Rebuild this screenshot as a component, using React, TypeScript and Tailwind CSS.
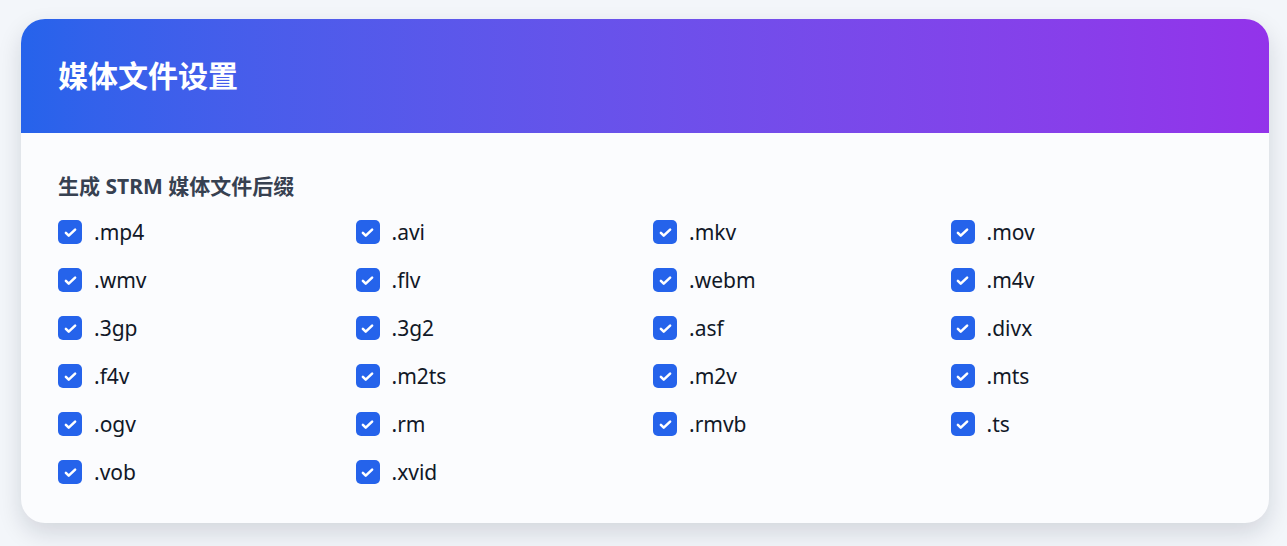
import React, { useState } from 'react';

const EXTS = [
  '.mp4', '.avi', '.mkv', '.mov',
  '.wmv', '.flv', '.webm', '.m4v',
  '.3gp', '.3g2', '.asf', '.divx',
  '.f4v', '.m2ts', '.m2v', '.mts',
  '.ogv', '.rm', '.rmvb', '.ts',
  '.vob', '.xvid',
];

const CheckBox: React.FC<{ checked: boolean }> = ({ checked }) => (
  <span
    className={`flex h-6 w-6 shrink-0 items-center justify-center rounded-[5px] ${
      checked ? 'bg-[#2563eb]' : 'border-2 border-gray-300 bg-white'
    }`}
  >
    {checked && (
      <svg viewBox="0 0 24 24" className="h-[17px] w-[17px]" fill="none">
        <path
          d="M5.5 12.5l4 4L18.5 8"
          stroke="white"
          strokeWidth="3.6"
          strokeLinecap="round"
          strokeLinejoin="round"
        />
      </svg>
    )}
  </span>
);

const App: React.FC = () => {
  const [selected, setSelected] = useState<string[]>(EXTS);

  const toggle = (ext: string) =>
    setSelected((s) => (s.includes(ext) ? s.filter((e) => e !== ext) : [...s, ext]));

  return (
    <div
      className="min-h-screen bg-[#f3f6fa] pl-[21px] pr-[18px] pt-[19px] pb-6"
      style={{ fontFamily: '"Noto Sans", "Noto Sans CJK SC", sans-serif' }}
    >
      <div className="overflow-hidden rounded-[24px] bg-[#fbfcfe] shadow-[0_10px_24px_rgba(15,23,42,0.14)]">
        <div className="flex h-[114px] items-center bg-gradient-to-r from-[#2563eb] to-[#9333ea] px-[37px]">
          <h1 className="text-[30px] font-bold leading-9 text-white">媒体文件设置</h1>
        </div>

        <div className="px-[37px] pt-[39px] pb-[39px]">
          <div className="mb-[20px] text-[21px] font-bold leading-7 text-[#374151]">
            生成 STRM 媒体文件后缀
          </div>
          <div className="grid grid-cols-4 gap-x-4 gap-y-6">
            {EXTS.map((ext) => (
              <label
                key={ext}
                className="flex h-6 cursor-pointer items-center gap-3"
                onClick={() => toggle(ext)}
              >
                <CheckBox checked={selected.includes(ext)} />
                <span className="text-[21px] leading-6 text-[#111827]">{ext}</span>
              </label>
            ))}
          </div>
        </div>
      </div>
    </div>
  );
};

export default App;
